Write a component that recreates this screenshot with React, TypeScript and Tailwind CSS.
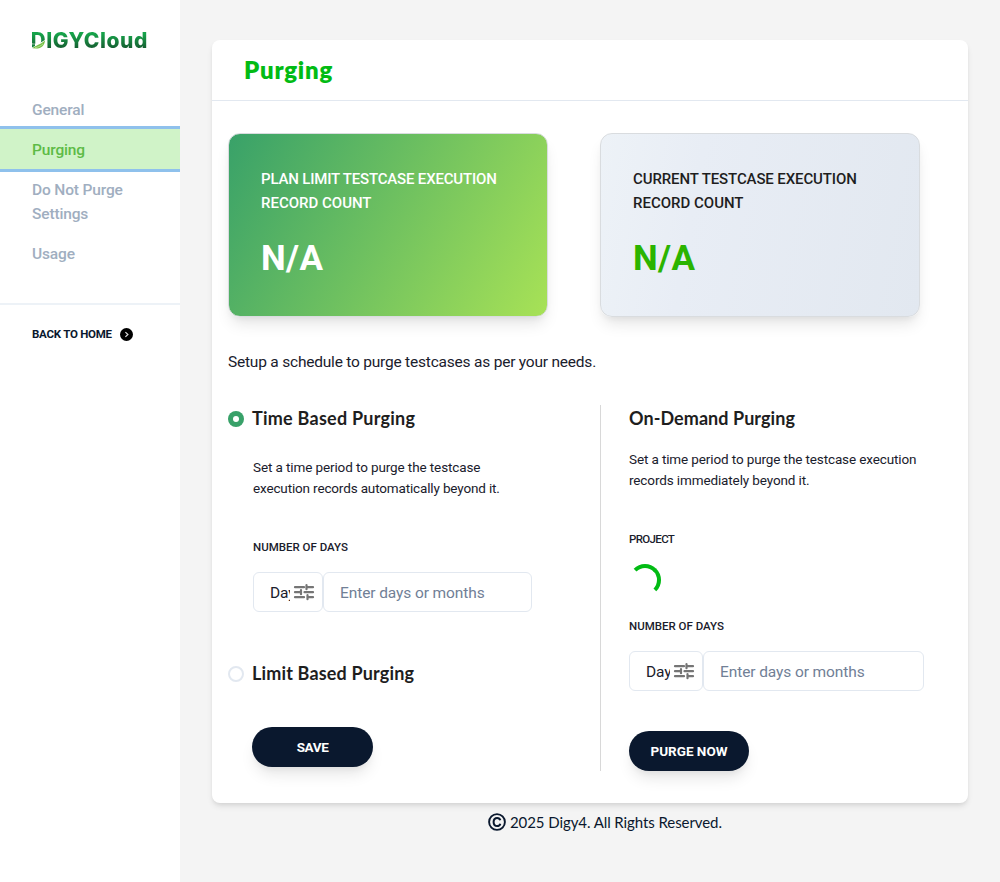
import type { ReactNode } from 'react';

function Logo() {
  return (
    <div className="relative ml-8 mt-[27px] h-[28px] w-[120px]">
      <div className="bg-gradient-to-b from-[#16a34a] from-25% to-[#14532d] to-85% bg-clip-text font-['Inter',sans-serif] text-[21px] leading-[28px] font-extrabold tracking-[0.55px] whitespace-nowrap text-transparent">
        <span className="-ml-[1.5px]">DIGYCloud</span>
      </div>
      <svg className="absolute left-0 top-[12px]" width="14" height="10" viewBox="0 0 14 10">
        <path d="M0 10 V4.500 C5 5.500 9 4 13.500 0.500 C14 5 11 9.500 5 10 Z" fill="#fff" />
        <path d="M0 5.200 H3 V7 L0 8.500 Z" fill="#15803d" />
        <path d="M0.500 9.300 C3 6.200 9 5.800 13 1.200 C12.800 6 9.500 9.600 4 9.600 Z" fill="#74c043" />
        <path d="M3 8.700 C6 8.200 9 7 11 4.800" stroke="#d7f0c4" strokeWidth="0.600" fill="none" />
      </svg>
    </div>
  );
}

function NavItem({ children, active }: { children: ReactNode; active?: boolean }) {
  return (
    <a
      className={
        active
          ? 'relative block bg-[#d0f3c8] px-8 pt-[9px] pb-[7px] text-[#5dbb46] shadow-[0_0_0_3px_#8fc1ec]'
          : 'block px-8 pt-[9px] pb-[7px] text-[#a0aec0]'
      }
    >
      {children}
    </a>
  );
}

function TuneIcon() {
  return (
    <svg className="ml-[2px] shrink-0" width="24" height="24" viewBox="0 0 24 24" fill="none" stroke="#757575" strokeWidth="2.2" strokeLinecap="round">
      <path d="M3 7.200h9M15 7.200h6M14.500 5.200v4M3 12.200h5M12.500 12.200H21M9 10.200v4M3 17.200h9M16.500 17.200H21M15.500 15.200v4" />
    </svg>
  );
}

function DaysField({ clip, select, input }: { clip: string; select: string; input: string }) {
  return (
    <div className="flex h-10 text-[15.5px] leading-6">
      <div className={`flex items-center rounded-md border border-[#e2e8f0] pl-4 text-[#1a202c] ${select}`}>
        <span className={`mt-px overflow-hidden whitespace-nowrap tracking-[-0.1px] ${clip}`}>Day</span>
        <TuneIcon />
      </div>
      <div className={`flex items-center rounded-md border border-[#e2e8f0] pl-4 pt-px tracking-[-0.1px] text-[#718096] ${input}`}>
        Enter days or months
      </div>
    </div>
  );
}

function StatCard({ title, className, valueClass }: { title: ReactNode; className: string; valueClass: string }) {
  return (
    <div
      className={`h-[184px] w-80 rounded-xl border border-[#d9dcdf] px-8 pt-[33px] shadow-[0_10px_15px_-3px_rgba(0,0,0,0.1),0_4px_6px_-2px_rgba(0,0,0,0.05)] ${className}`}
    >
      <div className="text-[15px] leading-6 font-medium whitespace-nowrap">{title}</div>
      <div className={`mt-[17px] text-[35px] leading-[54px] font-bold tracking-[0.4px] ${valueClass}`}>N/A</div>
    </div>
  );
}

const heading = "font-['Lato',sans-serif] text-[18px] leading-[26px] font-bold text-[#1e1e1e] whitespace-nowrap";
const label = 'text-[11.5px] leading-4 font-medium text-[#1a202c]';
const pill =
  'flex h-10 items-center justify-center rounded-full bg-[#0a182e] text-[13.5px] font-bold text-white shadow-[0_10px_15px_-3px_rgba(0,0,0,0.1),0_4px_6px_-2px_rgba(0,0,0,0.05)]';

export default function App() {
  return (
    <div className="flex h-[882px] w-[1000px] overflow-hidden bg-[#f4f4f4] font-['Roboto',sans-serif] text-[#1a202c]">
      <aside className="w-[180px] shrink-0 overflow-hidden bg-white">
        <Logo />
        <nav className="mt-[34px] text-[15.5px] leading-6 font-medium tracking-[-0.15px]">
          <NavItem>General</NavItem>
          <NavItem active>Purging</NavItem>
          <NavItem>
            Do Not Purge
            <br />
            Settings
          </NavItem>
          <NavItem>Usage</NavItem>
        </nav>
        <div className="mt-[30px] h-[2px] bg-[#edf2f7]" />
        <div className="mt-[19px] flex h-5 items-center gap-2 pl-8 text-[11.5px] font-bold tracking-[-0.24px] text-[#0a182e]">
          <span className="mt-px w-20 whitespace-nowrap">BACK TO HOME</span>
          <svg width="13" height="13" viewBox="0 0 13 13">
            <circle cx="6.500" cy="6.500" r="6.500" fill="#000" />
            <path d="M5.400 4.100 L7.900 6.500 L5.400 8.900" fill="none" stroke="#ddd" strokeWidth="1.200" />
          </svg>
        </div>
      </aside>

      <main className="flex flex-col pl-8 pt-10">
        <section className="h-[763px] w-[756px] rounded-lg bg-white shadow-[0_4px_6px_-1px_rgba(0,0,0,0.1),0_2px_4px_-1px_rgba(0,0,0,0.06)]">
          <header className="h-[61px] border-b border-[#e2e8f0] pl-8 font-['Lato',sans-serif] text-[24px] leading-[60px] font-extrabold tracking-[0.73px] text-[#02bb14]">
            Purging
          </header>
          <div className="flex gap-[52px] pl-4 pt-8">
            <StatCard
              title={
                <>
                  <span className="tracking-[-0.18px]">PLAN LIMIT TESTCASE EXECUTION</span>
                  <br />
                  RECORD COUNT
                </>
              }
              className="bg-[linear-gradient(120deg,#38a169,#a8e256)] bg-origin-border text-white"
              valueClass="text-white"
            />
            <StatCard
              title={
                <>
                  <span className="tracking-[-0.11px]">CURRENT TESTCASE EXECUTION</span>
                  <br />
                  RECORD COUNT
                </>
              }
              className="bg-[linear-gradient(100deg,#edf2f7,#e8edf5_30%,#e2e8f0)] bg-origin-border text-[#1e1e1e]"
              valueClass="text-[#2bb400]"
            />
          </div>
          <p className="mt-[33px] pl-4 text-[15.5px] leading-6 tracking-[-0.21px]">
            Setup a schedule to purge testcases as per your needs.
          </p>

          <div className="mt-[31px] flex pl-4">
            <div className="w-[372px]">
              <div className="flex items-center gap-2">
                <span className="mt-[2px] flex size-4 items-center justify-center rounded-full bg-[#38a169]">
                  <span className="size-[6px] rounded-full bg-white" />
                </span>
                <h2 className={`${heading} tracking-[0.24px]`}>Time Based Purging</h2>
              </div>
              <div className="pl-[25px]">
                <p className="mt-[26px] text-[13.5px] leading-[21px] tracking-[-0.11px]">
                  Set a time period to purge the testcase
                  <br />
                  <span className="tracking-[-0.15px]">execution records automatically beyond it.</span>
                </p>
                <div className={`mt-10 ${label}`}>NUMBER OF DAYS</div>
                <div className="mt-[17px]">
                  <DaysField clip="w-5" select="w-[70px]" input="w-[209px]" />
                </div>
              </div>
              <div className="mt-12 flex items-center gap-2">
                <span className="mt-[2px] size-4 rounded-full border-2 border-[#e2e8f0]" />
                <h2 className={`${heading} tracking-[0.16px]`}>Limit Based Purging</h2>
              </div>
              <div className={`mt-[41px] ml-6 w-[121px] tracking-[-0.4px] ${pill}`}>SAVE</div>
            </div>

            <div className="h-[366px] border-l border-[#d8d8d8] pl-7">
              <h2 className={`${heading} tracking-[0.06px]`}>On-Demand Purging</h2>
              <p className="mt-[18px] text-[13.5px] leading-[21px] tracking-[-0.12px]">
                Set a time period to purge the testcase execution
                <br />
                records immediately beyond it.
              </p>
              <div className={`mt-10 tracking-[-0.65px] ${label}`}>PROJECT</div>
              <div className="mt-[17px] size-8 rounded-full border-4 border-transparent border-t-[#02bb14] border-r-[#02bb14]" />
              <div className={`mt-[22px] ${label}`}>NUMBER OF DAYS</div>
              <div className="mt-[17px]">
                <DaysField clip="w-6" select="w-[74px]" input="w-[221px]" />
              </div>
              <div className={`mt-10 w-[120px] ${pill}`}>PURGE NOW</div>
            </div>
          </div>
        </section>

        <footer className="mt-[7px] flex h-6 items-center pl-[276px] font-['Lato',sans-serif] text-[15px] tracking-[-0.08px] text-[#0a182e]">
          <svg className="mr-1" width="18" height="18" viewBox="0 0 18 18" fill="none" stroke="#0a182e">
            <circle cx="9" cy="9" r="7.900" strokeWidth="1.900" />
            <path d="M12.300 7.300 C11.800 5.400 10.600 4.900 9.200 4.900 C7 4.900 5.600 6.500 5.600 9 S7 13.100 9.200 13.100 C10.600 13.100 11.800 12.600 12.300 10.700" strokeWidth="2" />
          </svg>
          2025 Digy4. All Rights Reserved.
        </footer>
      </main>
    </div>
  );
}
